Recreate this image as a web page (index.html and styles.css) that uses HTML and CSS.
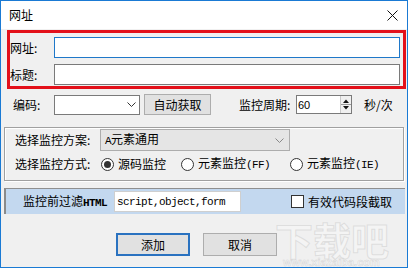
FILE: index.html
```html
<!DOCTYPE html>
<html lang="zh">
<head>
<meta charset="utf-8">
<link rel="stylesheet" href="styles.css">
</head>
<body>
<div class="window">
  <div class="titlebar">
    <span class="title">网址</span>
    <svg class="close" width="11" height="11" viewBox="0 0 11 11"><path d="M0.5 0.5L10.5 10.5M10.5 0.5L0.5 10.5" stroke="#111" stroke-width="1" fill="none"/></svg>
  </div>

  <div class="annot">
    <div class="frow"><span class="lbl">网址:</span><div class="tb focus"></div></div>
    <div class="frow"><span class="lbl">标题:</span><div class="tb"></div></div>
  </div>

  <div class="row2">
    <span class="enc-lbl">编码:</span>
    <div class="select">
      <svg class="chev" width="9" height="5" viewBox="0 0 9 5"><path d="M0.5 0.5L4.5 4.5L8.5 0.5" stroke="#333" fill="none"/></svg>
    </div>
    <div class="btn auto">自动获取</div>
    <span class="period">监控周期:</span>
    <div class="spin">
      <span class="spin-val">60</span>
      <div class="spin-btns">
        <svg width="10" height="17" viewBox="0 0 10 17"><path d="M2 7H8L5 3.5Z" fill="#111"/><path d="M0 8.5H10" stroke="#9a9a9a"/><path d="M2 10H8L5 13.5Z" fill="#111"/></svg>
      </div>
    </div>
    <span class="unit">秒/次</span>
  </div>

  <div class="group">
    <div class="grow">
      <span class="glbl">选择监控方案:</span>
      <div class="combo"><span><span class="mono">A</span>元素通用</span>
        <svg class="chev" width="9" height="5" viewBox="0 0 9 5"><path d="M0.5 0.5L4.5 4.5L8.5 0.5" stroke="#888" fill="none"/></svg>
      </div>
    </div>
    <div class="grow radios">
      <span class="glbl">选择监控方式:</span>
      <div class="radio r1"><span class="circle on"></span><span>源码监控</span></div>
      <div class="radio r2"><span class="circle"></span><span>元素监控<span class="mono">(FF)</span></span></div>
      <div class="radio r3"><span class="circle"></span><span>元素监控<span class="mono">(IE)</span></span></div>
    </div>
  </div>

  <div class="filter">
    <span class="flbl">监控前过滤<span class="mono b">HTML</span></span>
    <div class="ftb mono">script,object,form</div>
    <span class="check"></span>
    <span class="clbl">有效代码段截取</span>
  </div>

  <div class="buttons">
    <div class="btn dlg default">添加</div>
    <div class="btn dlg">取消</div>
  </div>

  <div class="watermark" aria-hidden="true">
    <span class="wm-big">下载吧</span>
    <span class="wm-url">www.xiazaiba.com</span>
  </div>
</div>
</body>
</html>
```

FILE: styles.css
```css
html, body {
  margin: 0;
  padding: 0;
  background: #f0f0f0;
}

body {
  font-family: "Noto Sans CJK SC", "Noto Sans", sans-serif;
  font-size: 12px;
  color: #000;
  line-height: 14px;
}

.window {
  position: relative;
  width: 408px;
  height: 268px;
  box-sizing: border-box;
  border: 1px solid #1a7ad4;
  background: #f0f0f0;
  display: flex;
  flex-direction: column;
  overflow: hidden;
}

.mono {
  font-family: "Liberation Mono", "DejaVu Sans Mono", monospace;
  font-size: 11px;
  letter-spacing: -0.6px;
}

.b { font-weight: bold; }

/* title bar */
.titlebar {
  height: 28px;
  flex: none;
  background: #fff;
  display: flex;
  align-items: center;
  justify-content: space-between;
  padding: 0 9px 0 8px;
}

.title { font-size: 12px; }

/* red annotation box */
.annot {
  margin: 1px 0 0 6px;
  width: 399px;
  height: 59px;
  flex: none;
  box-sizing: border-box;
  border: 3px solid #e3101a;
  padding-top: 4px;
  display: flex;
  flex-direction: column;
  gap: 6px;
}

.frow {
  display: flex;
  align-items: center;
  height: 21px;
}

.frow .lbl { width: 44px; }

.tb {
  width: 346px;
  height: 21px;
  box-sizing: border-box;
  border: 1px solid #7a7a7a;
  background: #fff;
}

.tb.focus { border-color: #1f78c9; }

/* encoding row */
.row2 {
  margin-top: 5px;
  height: 21px;
  flex: none;
  display: flex;
  align-items: center;
  padding-left: 12px;
}

.enc-lbl { width: 41px; }

.select {
  width: 86px;
  height: 20px;
  box-sizing: border-box;
  border: 1px solid #7a7a7a;
  background: #fff;
  display: flex;
  align-items: center;
  justify-content: flex-end;
  padding-right: 3px;
}

.btn {
  box-sizing: border-box;
  background: #e1e1e1;
  border: 1px solid #adadad;
  display: flex;
  align-items: center;
  justify-content: center;
}

.btn.auto {
  margin-left: 4px;
  width: 67px;
  height: 21px;
}

.period {
  margin-left: 28px;
  width: 57px;
}

.spin {
  width: 56px;
  height: 19px;
  box-sizing: border-box;
  border: 1px solid #7a7a7a;
  background: #fff;
  display: flex;
  align-items: center;
  justify-content: space-between;
}

.spin-val {
  font-family: "Liberation Sans", sans-serif;
  font-size: 11px;
  padding-left: 1px;
}

.spin-btns {
  width: 11px;
  height: 17px;
  box-sizing: border-box;
  border-left: 1px solid #c8c8c8;
  background: #f0f0f0;
  display: flex;
}

.unit { margin-left: 12px; }

/* group box */
.group {
  margin: 12px 0 0 3px;
  width: 400px;
  flex: none;
  box-sizing: border-box;
  border: 1px solid #a0a0a0;
  box-shadow: inset 1px 1px 0 #fff, 1px 1px 0 #fff;
  padding: 1px 0 7px 10px;
  display: flex;
  flex-direction: column;
  gap: 4px;
}

.grow {
  display: flex;
  align-items: center;
}

.glbl { width: 85px; }

.combo {
  width: 190px;
  height: 22px;
  box-sizing: border-box;
  border: 1px solid #adadad;
  background: #e5e5e5;
  display: flex;
  align-items: center;
  justify-content: space-between;
  padding: 0 5px 0 4px;
}

.radios { height: 18px; }

.radio {
  display: flex;
  align-items: center;
  gap: 4px;
}

.r1 { width: 80px; }
.r2 { width: 109px; }

.circle {
  margin-left: 1px;
  width: 13px;
  height: 13px;
  box-sizing: border-box;
  border: 1px solid #333;
  border-radius: 50%;
  background: #fff;
  display: flex;
  align-items: center;
  justify-content: center;
}

.circle.on::after {
  content: "";
  width: 7px;
  height: 7px;
  border-radius: 50%;
  background: #333;
}

/* filter bar */
.filter {
  margin: 7px 0 0 3px;
  width: 401px;
  height: 26px;
  flex: none;
  box-sizing: border-box;
  background: #c3d8ef;
  border-top: 1px solid #8f8f8f;
  border-left: 2px solid #8a8a8a;
  display: flex;
  align-items: center;
  padding-left: 17px;
}

.flbl { width: 91px; }

.ftb {
  width: 127px;
  height: 21px;
  box-sizing: border-box;
  border: 1px solid #cfcfcf;
  background: #fff;
  display: flex;
  align-items: center;
  padding-left: 2px;
}

.check {
  margin-left: 50px;
  width: 13px;
  height: 13px;
  box-sizing: border-box;
  border: 1px solid #333;
  background: #fff;
}

.clbl { margin-left: 4px; }

/* dialog buttons */
.buttons {
  margin-top: 19px;
  height: 23px;
  flex: none;
  display: flex;
  gap: 13px;
  padding-left: 115px;
}

.btn.dlg {
  width: 74px;
  height: 23px;
}

.btn.default {
  border: 2px solid #2a72c0;
}

/* watermark */
.watermark {
  position: absolute;
  left: 274px;
  top: 219px;
  width: 126px;
  height: 47px;
  pointer-events: none;
}

.wm-big {
  position: absolute;
  left: 0;
  top: 0;
  font-size: 38px;
  line-height: 38px;
  font-weight: bold;
  color: rgba(255, 255, 255, 0.3);
  -webkit-text-stroke: 1px rgba(190, 190, 190, 0.4);
}

.wm-url {
  position: absolute;
  left: 8px;
  top: 38px;
  font-family: "Liberation Sans", sans-serif;
  font-size: 11px;
  line-height: 9px;
  font-weight: bold;
  color: rgba(255, 255, 255, 0.3);
  -webkit-text-stroke: 0.5px rgba(180, 180, 180, 0.45);
}
```
